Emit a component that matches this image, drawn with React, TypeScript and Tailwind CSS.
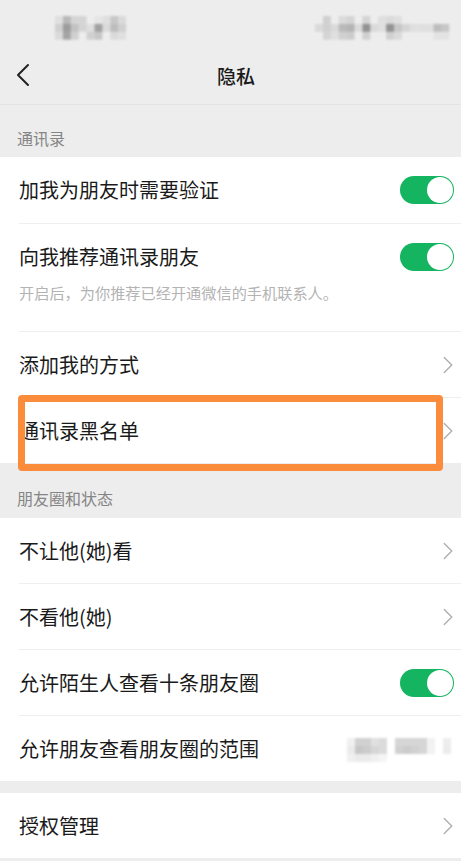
import { ChevronLeft, ChevronRight } from 'lucide-react';

const font = { fontFamily: '"Noto Sans CJK SC", "Liberation Sans", sans-serif' };

// mosaic patches hiding the status bar and the friend circle range value
function Mosaic({ rows, cell, className }: { rows: number[][]; cell: number; className?: string }) {
  return (
    <svg
      width={rows[0].length * cell}
      height={rows.length * cell}
      className={className}
      style={{ filter: 'blur(1px)', overflow: 'visible' }}
      aria-hidden="true"
    >
      {rows.flatMap((row, y) =>
        row.map((v, x) =>
          v ? <rect key={`${x}-${y}`} x={x * cell} y={y * cell} width={cell} height={cell} fill="#000" fillOpacity={v / 100} /> : null
        )
      )}
    </svg>
  );
}

function Toggle() {
  return (
    <div className="flex h-[28px] w-[54px] shrink-0 items-center justify-end rounded-full bg-[#14b460] p-[1px]">
      <div className="h-[26px] w-[26px] rounded-full bg-white" />
    </div>
  );
}

function Chevron() {
  return <ChevronRight className="mr-[-9px] h-[30px] w-[30px] shrink-0 text-[#aeaeae]" strokeWidth={1.1} />;
}

function Row({ label, right, last, height = 'h-[66px]' }: { label: string; right: React.ReactNode; last?: boolean; height?: string }) {
  return (
    <div className={`flex items-center justify-between pr-[7px] text-[20px] text-[#1a1a1a] ${height} ${last ? '' : 'border-b border-[#efefef]'}`}>
      <span>{label}</span>
      {right}
    </div>
  );
}

function SectionLabel({ text, height }: { text: string; height: string }) {
  return (
    <div className={`flex items-center bg-[#ededed] pl-[17px] text-[16px] text-[#858585] ${height}`}>
      {text}
    </div>
  );
}

export default function App() {
  return (
    <div className="relative h-[861px] w-[461px] overflow-hidden bg-[#ededed]" style={font}>
      <div className="flex h-[52px] items-start justify-between pl-[55px] pr-[12px] pt-[16px]">
        <Mosaic
          cell={7.9}
          rows={[
            [6, 22, 10, 10, 0, 3, 6, 16, 8],
            [12, 34, 18, 10, 6, 32, 8, 20, 12],
            [8, 30, 12, 0, 12, 16, 0, 8, 6],
          ]}
        />
        <Mosaic
          cell={7.9}
          rows={[
            [0, 12, 0, 8, 10, 0, 10, 0, 6, 8, 6, 0, 0, 0, 0, 0, 0],
            [8, 12, 8, 22, 24, 8, 38, 8, 6, 38, 16, 10, 6, 6, 6, 20, 16],
            [0, 10, 6, 12, 14, 0, 12, 0, 0, 12, 8, 0, 0, 0, 0, 4, 4],
          ]}
        />
      </div>

      <div className="relative flex h-[53px] items-center justify-center border-b border-[#e3e3e3] pb-[3px] pl-[11px]">
        <ChevronLeft className="absolute left-[3px] top-[3px] h-[40px] w-[40px] text-[#222222]" strokeWidth={1.2} />
        <span className="text-[19px] font-medium text-[#1a1a1a]">隐私</span>
      </div>

      <SectionLabel text="通讯录" height="h-[52px] pt-[16px] pb-[2px]" />

      <div className="bg-white pl-[19px]">
        <Row label="加我为朋友时需要验证" right={<Toggle />} height="h-[67px]" />
        <div className="h-[108px] border-b border-[#efefef] pr-[7px] pt-[19px]">
          <div className="flex h-[28px] items-center justify-between text-[20px] text-[#1a1a1a]">
            <span>向我推荐通讯录朋友</span>
            <Toggle />
          </div>
          <div className="mt-[10px] text-[15.2px] text-[#b3b3b3]">开启后，为你推荐已经开通微信的手机联系人。</div>
        </div>
        <Row label="添加我的方式" right={<Chevron />} />
        <Row label="通讯录黑名单" right={<Chevron />} last height="h-[65px]" />
      </div>

      <SectionLabel text="朋友圈和状态" height="h-[55px] pt-[17px] pb-[3px]" />

      <div className="bg-white pl-[19px]">
        <Row label="不让他(她)看" right={<Chevron />} />
        <Row label="不看他(她)" right={<Chevron />} />
        <Row label="允许陌生人查看十条朋友圈" right={<Toggle />} />
        <Row
          label="允许朋友查看朋友圈的范围"
          last
          height="h-[65px]"
          right={
            <Mosaic
              cell={8}
              className="mr-[3px] mt-[3px]"
              rows={[
                [6, 18, 18, 12, 14, 0, 16, 16, 16, 16, 5, 0, 7],
                [8, 22, 20, 16, 14, 0, 18, 20, 18, 16, 5, 0, 8],
                [6, 8, 8, 6, 4, 0, 0, 0, 0, 0, 0, 0, 0],
              ]}
            />
          }
        />
      </div>

      <div className="h-[12px]" />

      <div className="bg-white pl-[19px]">
        <Row label="授权管理" right={<Chevron />} last height="h-[65px]" />
      </div>

      {/* annotation drawn over the screenshot */}
      <div className="absolute left-[18px] top-[395px] h-[76px] w-[425px] rounded-[4px] border-[7px] border-[#fb8c3c]" />
    </div>
  );
}
